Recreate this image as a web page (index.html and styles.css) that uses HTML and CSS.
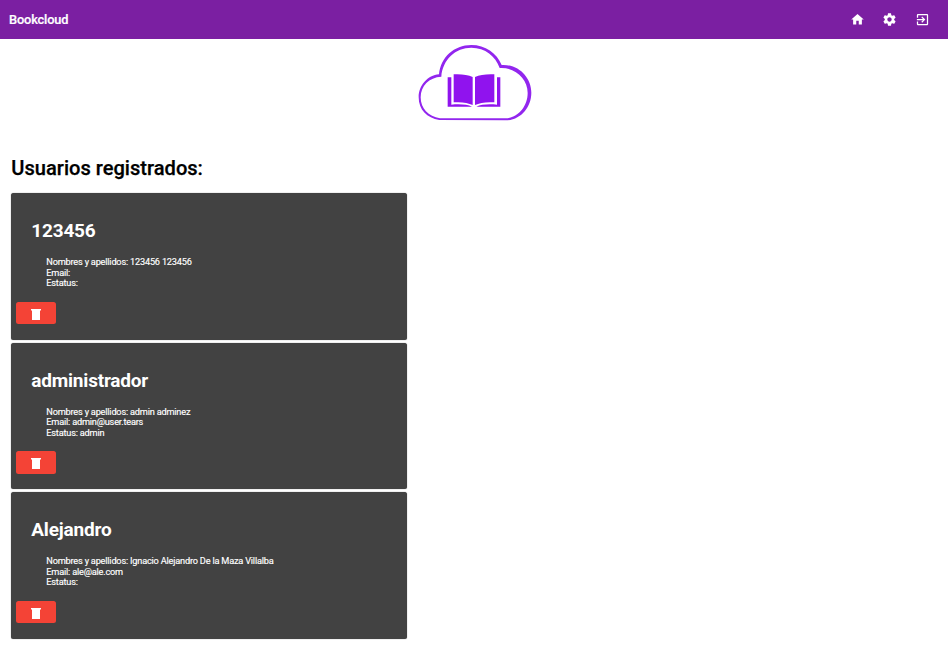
FILE: index.html
```html
<!DOCTYPE html>
<html lang="es">
<head>
<meta charset="utf-8">
<title>Bookcloud</title>
<link rel="stylesheet" href="styles.css">
</head>
<body>
<header class="toolbar">
  <span class="brand">Bookcloud</span>
  <nav class="actions">
    <svg class="icon" viewBox="0 0 24 24"><path d="M10 20v-6h4v6h5v-8h3L12 3 2 12h3v8z"/></svg>
    <svg class="icon" viewBox="0 0 24 24"><path d="M19.43 12.98c.04-.32.07-.64.07-.98s-.03-.66-.07-.98l2.11-1.65c.19-.15.24-.42.12-.64l-2-3.46c-.12-.22-.39-.3-.61-.22l-2.49 1c-.52-.4-1.08-.73-1.69-.98l-.38-2.65C14.46 2.18 14.25 2 14 2h-4c-.25 0-.46.18-.49.42l-.38 2.65c-.61.25-1.17.59-1.69.98l-2.49-1c-.23-.09-.49 0-.61.22l-2 3.46c-.13.22-.07.49.12.64l2.11 1.65c-.04.32-.07.65-.07.98s.03.66.07.98l-2.11 1.65c-.19.15-.24.42-.12.64l2 3.46c.12.22.39.3.61.22l2.49-1c.52.4 1.08.73 1.69.98l.38 2.65c.03.24.24.42.49.42h4c.25 0 .46-.18.49-.42l.38-2.65c.61-.25 1.17-.59 1.69-.98l2.49 1c.23.09.49 0 .61-.22l2-3.46c.12-.22.07-.49-.12-.64l-2.11-1.65zM12 15.5c-1.93 0-3.5-1.57-3.5-3.5s1.57-3.5 3.5-3.5 3.5 1.57 3.5 3.5-1.57 3.5-3.5 3.5z"/></svg>
    <svg class="icon" viewBox="0 0 24 24"><path d="M10.09 15.59L11.5 17l5-5-5-5-1.41 1.41L12.67 11H3v2h9.67l-2.58 2.59zM19 3H5c-1.11 0-2 .9-2 2v4h2V5h14v14H5v-4H3v4c0 1.1.89 2 2 2h14c1.1 0 2-.9 2-2V5c0-1.1-.9-2-2-2z"/></svg>
  </nav>
</header>
<main>
  <svg class="logo" viewBox="0 9 390 273">
    <path class="cloud" fill-rule="evenodd" d="M88 252C51 246 26 222 26 184C26 148 53 118 87 115C92 64 132 27 184 27C226 27 260 51 275 87C325 84 364 124 364 170C364 215 331 253 286 253ZM90 247H286C323 246 353 212 353 171C353 129 316 93 269 96C256 60 226 35 184 35C137 35 98 70 94 122C57 124 32 150 32 184C32 218 55 241 90 247Z"/>
    <path class="book" d="M131 115C154 114 174 116 188 123V207C174 200 154 197 131 199ZM195 123C209 116 230 114 253 115V199C230 197 209 200 195 207ZM113 124H124V206C148 204 172 205 186 212H113ZM261 124H271V212H199C213 205 237 204 261 206Z"/>
  </svg>
  <section class="users">
    <h2 class="heading">Usuarios registrados:</h2>
    <article class="card">
      <h3 class="name">123456</h3>
      <div class="details"><div>Nombres y apellidos: 123456 123456</div><div>Email:</div><div>Estatus:</div></div>
      <button class="delete" aria-label="Eliminar"><svg class="trash" viewBox="0 0 10 11"><path d="M0 0H10V1.600H9V11H1V1.600H0Z"/></svg></button>
    </article>
    <article class="card">
      <h3 class="name">administrador</h3>
      <div class="details"><div>Nombres y apellidos: admin adminez</div><div>Email: admin@user.tears</div><div>Estatus: admin</div></div>
      <button class="delete" aria-label="Eliminar"><svg class="trash" viewBox="0 0 10 11"><path d="M0 0H10V1.600H9V11H1V1.600H0Z"/></svg></button>
    </article>
    <article class="card">
      <h3 class="name">Alejandro</h3>
      <div class="details"><div>Nombres y apellidos: Ignacio Alejandro De la Maza Villalba</div><div>Email: ale@ale.com</div><div>Estatus:</div></div>
      <button class="delete" aria-label="Eliminar"><svg class="trash" viewBox="0 0 10 11"><path d="M0 0H10V1.600H9V11H1V1.600H0Z"/></svg></button>
    </article>
  </section>
</main>
</body>
</html>
```
FILE: styles.css
```css
* { box-sizing: border-box; }
body {
  margin: 0;
  background: #fff;
  color: #000;
  font-family: Roboto, "Liberation Sans", sans-serif;
}
.toolbar {
  height: 39px;
  padding: 0 18.500px 0 9px;
  display: flex;
  align-items: center;
  justify-content: space-between;
  background: #7b1fa2;
  color: #fff;
}
.brand {
  font-size: 12.800px;
  font-weight: 500;
  letter-spacing: -.15px;
  -webkit-text-stroke: .2px currentColor;
}
.actions { display: flex; gap: 17.500px; }
.icon { width: 15px; height: 15px; fill: #fff; }
.logo { display: block; width: 130px; height: 91px; margin-left: 410px; }
.cloud { fill: #9226ee; }
.book { fill: #9013ee; }
.users { width: 407px; padding-left: 11.300px; }
.heading {
  margin: 26px 0 13px;
  font-size: 20.100px;
  font-weight: 500;
  line-height: 24px;
  -webkit-text-stroke: .25px currentColor;
}
.card {
  height: 146.500px;
  margin-bottom: 3px;
  padding: 25px 5px 0;
  border-radius: 2.500px;
  background: #424242;
  color: #fff;
  box-shadow: 0 0 1px rgba(0, 0, 0, .6);
}
.name {
  margin: 0 0 14px 15px;
  font-size: 19px;
  font-weight: 700;
  line-height: 25px;
  letter-spacing: -.2px;
}
.details {
  margin-left: 30px;
  font-size: 9.200px;
  line-height: 10.600px;
  letter-spacing: -.2px;
  white-space: nowrap;
  -webkit-text-stroke: .15px currentColor;
}
.delete {
  display: flex;
  align-items: center;
  justify-content: center;
  width: 40px;
  height: 22.500px;
  margin-top: 13.200px;
  padding: 2px 0 0;
  border: 0;
  border-radius: 2.500px;
  background: #f44336;
}
.trash { width: 10px; height: 11px; fill: #fff; }
```
